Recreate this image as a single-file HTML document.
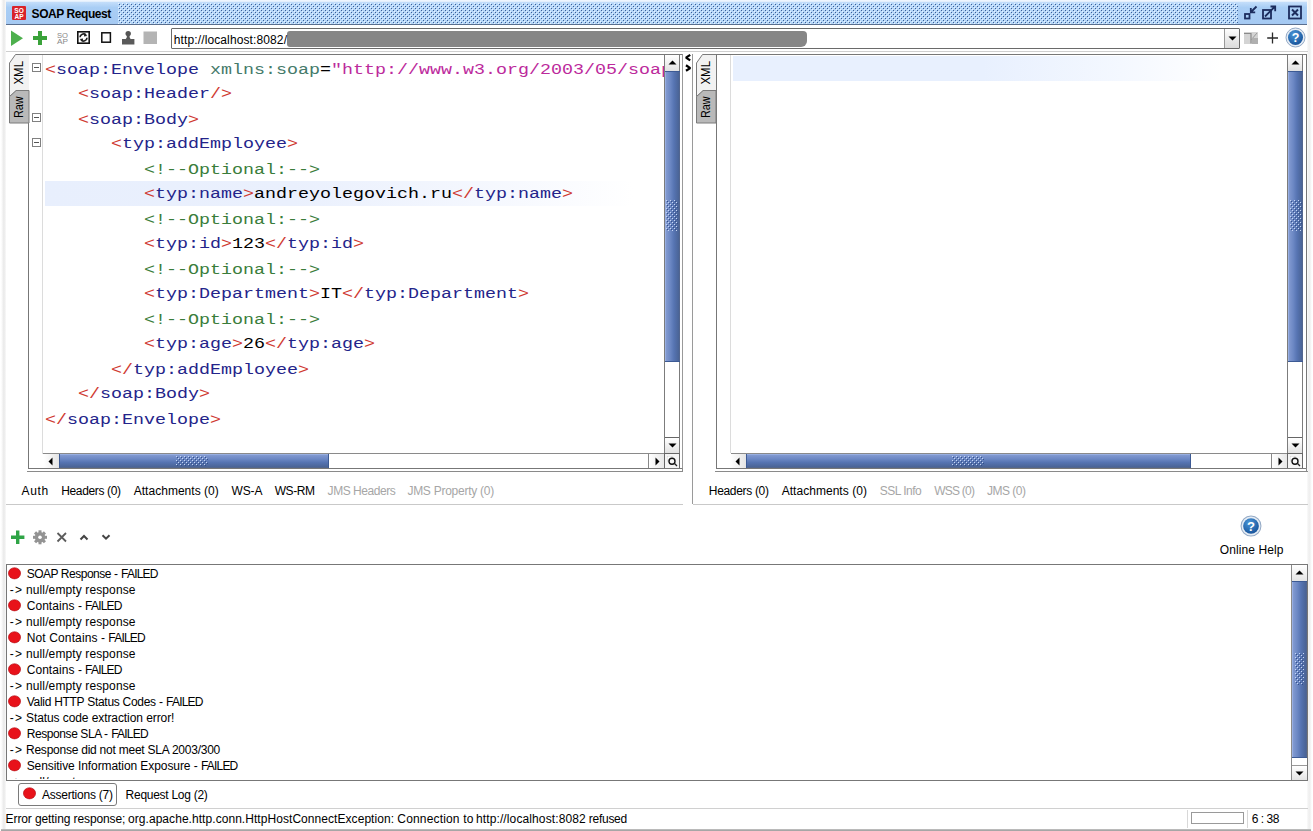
<!DOCTYPE html>
<html><head><meta charset="utf-8"><title>SOAP Request</title>
<style>
html,body{margin:0;padding:0;background:#fff;}
body{width:1313px;height:831px;position:relative;overflow:hidden;font-family:"Liberation Sans",sans-serif;font-size:12px;color:#000;}
.abs{position:absolute;}
#frameL{left:1px;top:0;width:5px;height:831px;background:linear-gradient(90deg,#fff,#ececec 50%,#eee 75%,#fafafa);}
#frameR{left:1307px;top:0;width:5px;height:831px;background:linear-gradient(90deg,#fafafa,#efefef 40%,#f0f0f0 60%,#fff);}
#frameB{left:1px;top:829px;width:1310px;height:2px;background:linear-gradient(#c4c4c4,#9c9c9c);}
#title{left:6px;top:2px;width:1301px;height:23px;background:linear-gradient(#c4defa,#a9cef5 25%,#a5c9f2);border-bottom:1px solid #5a6f8f;box-sizing:border-box;}
#title .dots{left:112px;top:1px;width:1124px;height:20px;background-color:#cfe2f7;background-image:radial-gradient(circle at 1px 1px,#6d8fc0 0.8px,transparent 1.1px);background-size:4px 4px;opacity:.8}
#title .txt{left:26px;top:4px;font-weight:bold;font-size:12px;letter-spacing:-0.45px;}
.code{font-family:"Liberation Mono",monospace;font-size:18.33px;line-height:30.488px;white-space:pre;transform:scaleY(0.82);transform-origin:0 0;}
.t{color:#cf3a32}.n{color:#24248a}.a{color:#457a6a}.v{color:#bc2a9c}.c{color:#3a7d3a}.x{color:#000}
.tab{font-size:12px;letter-spacing:-0.15px;white-space:nowrap;}
.dis{color:#a8a8a8}
.lb{font-size:12px;line-height:14px;height:14px;white-space:pre;}
</style></head><body>
<div class="abs" style="left:6px;top:0;width:1301px;height:2px;background:linear-gradient(#f4f9ff,#dcebfb)"></div><div class="abs" id="frameL"></div><div class="abs" id="frameR"></div><div class="abs" id="frameB"></div>

<svg width="0" height="0" style="position:absolute"><defs><pattern id="bp2" width="4" height="4" patternUnits="userSpaceOnUse"><rect x="0" y="0" width="1" height="1" fill="#c6d6f6"/><rect x="2" y="2" width="1" height="1" fill="#c6d6f6"/><rect x="1" y="1" width="1" height="1" fill="#34508a"/><rect x="3" y="3" width="1" height="1" fill="#34508a"/></pattern></defs></svg>
<!-- title bar -->
<div class="abs" id="title">
  <svg class="abs" style="left:112px;top:1px" width="1120" height="21"><defs><pattern id="bp" width="4" height="4" patternUnits="userSpaceOnUse"><rect width="4" height="4" fill="#b5d6f8"/><rect x="0" y="0" width="1" height="1" fill="#e8f3ff"/><rect x="2" y="2" width="1" height="1" fill="#e8f3ff"/><rect x="1" y="1" width="1" height="1" fill="#3d5f96"/><rect x="3" y="3" width="1" height="1" fill="#3d5f96"/></pattern></defs><rect width="1120" height="21" fill="url(#bp)"/></svg>
  <svg class="abs" style="left:6px;top:4px" width="14" height="14" viewBox="0 0 14 14"><rect width="14" height="14" rx="1" fill="#d8232a"/><text x="7" y="6.5" font-family="Liberation Sans,sans-serif" font-weight="bold" font-size="6.5" fill="#fff" text-anchor="middle">SO</text><text x="7" y="12.5" font-family="Liberation Sans,sans-serif" font-weight="bold" font-size="6.5" fill="#fff" text-anchor="middle">AP</text></svg>
  <svg class="abs" style="left:1236px;top:2.500px" width="64" height="16" viewBox="1242 4 64 16">
    <g fill="none" stroke="#1c2d5e" stroke-width="1.800">
      <rect x="1245" y="13" width="4.500" height="4.500"/>
      <path d="M1256.500 5.500L1251 11M1250.800 7v4.400h4.400"/>
      <rect x="1263" y="9" width="8" height="8.500"/>
      <path d="M1265 15.500L1275 5.500M1270.500 5.500h4.700v4.700"/>
      <rect x="1289" y="5.500" width="12" height="12"/>
      <path d="M1292 8.500l6 6M1298 8.500l-6 6" stroke-width="2"/>
    </g>
  </svg>

</div>

<!-- toolbar -->
<div class="abs" id="toolbar" style="left:6px;top:25px;width:1302px;height:26px;">
  <svg class="abs" style="left:0;top:0" width="170" height="26" viewBox="6 25 170 26">
    <polygon points="11,30.5 11,46 23,38.2" fill="#4db04d"/>
    <path d="M38 31h4v5h5v4h-5v5h-4v-5h-5v-4h5z" fill="#3aa23a"/>
    <text x="57" y="37.5" font-family="Liberation Sans,sans-serif" font-size="7" fill="#888" textLength="11" lengthAdjust="spacingAndGlyphs">SO</text>
    <text x="57" y="44" font-family="Liberation Sans,sans-serif" font-size="7" fill="#888" textLength="11" lengthAdjust="spacingAndGlyphs">AP</text>
    <rect x="77.8" y="31.8" width="11.4" height="11.4" fill="#fff" stroke="#111" stroke-width="1.6"/>
    <path d="M80 37.300a3.500 3.500 0 0 1 6-2.300M87 37.700a3.500 3.500 0 0 1-6 2.300" fill="none" stroke="#222" stroke-width="1.700"/>
    <path d="M84.500 33.300l2.800 2.700-3.400.6zM82.500 41.700l-2.800-2.700 3.400-.6z" fill="#222"/>
    <rect x="101.8" y="32.8" width="8.6" height="9.4" fill="#fff" stroke="#111" stroke-width="1.5"/>
    <circle cx="128.200" cy="33.600" r="2.700" fill="#555"/>
    <rect x="126.800" y="35" width="2.800" height="4" fill="#555"/>
    <path d="M126.800 37.500h2.800l1.200 1.800h-5.200z" fill="#555"/><rect x="122" y="39" width="12.400" height="5.500" fill="#5a5a5a"/>
    <rect x="143.500" y="31.500" width="13.500" height="12.500" fill="#b4b4b4"/>
  </svg>
  <div class="abs" style="left:165px;top:3px;width:1069px;height:21px;border:1px solid #6a6a6a;box-sizing:border-box;background:#fff;border-radius:1px"></div>
  <div class="abs" style="left:281px;top:6px;width:520px;height:16px;background:#868686;border-radius:3px 4px 6px 3px"></div>
  <div class="abs" style="left:1218px;top:4px;width:15px;height:19px;background:linear-gradient(#fdfdfd,#e8e8e8 60%,#dcdcdc);border-left:1px solid #999;box-sizing:border-box"></div>
  <svg class="abs" style="left:1222px;top:11px" width="9" height="5"><polygon points="0.500,0.500 8.500,0.500 4.500,4.500" fill="#000"/></svg>
  <svg class="abs" style="left:1238px;top:6px" width="15" height="14" viewBox="0 0 15 14"><rect x="0" y="1" width="14" height="12" fill="#d4d4d4"/><path d="M0 2.500h7v10" fill="none" stroke="#8a8a8a" stroke-width="1.200"/><path d="M7 9L13 2" stroke="#9a9a9a" stroke-width="1"/><rect x="8" y="7" width="6" height="6" fill="#b0b0b0"/></svg>
  <svg class="abs" style="left:1260px;top:6px" width="13" height="13" viewBox="0 0 13 13"><path d="M6.500 1.500v11M1.200 7h10.800" stroke="#2a2a2a" stroke-width="1.300"/></svg>
  <svg class="abs" style="left:1279px;top:2px" width="21" height="21" viewBox="0 0 21 21"><defs><radialGradient id="hg" cx="0.400" cy="0.300" r="0.800"><stop offset="0" stop-color="#4a96d8"/><stop offset="1" stop-color="#124c94"/></radialGradient></defs><circle cx="10.500" cy="10.500" r="9.500" fill="#e6edf5" stroke="#94aac6" stroke-width="1"/><circle cx="10.500" cy="10.500" r="7.500" fill="url(#hg)"/><text x="10.500" y="15" text-anchor="middle" font-family="Liberation Sans,sans-serif" font-weight="bold" font-size="12.500" fill="#fff">?</text></svg>
</div>
<div class="abs" style="left:6px;top:51px;width:1302px;height:1px;background:#cfcfcf"></div>

<!-- left editor -->
<div class="abs" id="edL" style="left:28px;top:54px;width:655px;height:415px;border:1px solid #777;border-right-color:#999;box-sizing:border-box;background:#fff;overflow:hidden">
  <div class="abs" style="left:13px;top:0;width:1px;height:399px;background:#dcdcdc"></div>
  <div class="abs" style="left:3px;top:8px;width:9px;height:9px;border:1px solid #808080;box-sizing:border-box;background:#fff"><div class="abs" style="left:1px;top:3px;width:5px;height:1px;background:#555"></div></div><div class="abs" style="left:3px;top:58px;width:9px;height:9px;border:1px solid #808080;box-sizing:border-box;background:#fff"><div class="abs" style="left:1px;top:3px;width:5px;height:1px;background:#555"></div></div><div class="abs" style="left:3px;top:83px;width:9px;height:9px;border:1px solid #808080;box-sizing:border-box;background:#fff"><div class="abs" style="left:1px;top:3px;width:5px;height:1px;background:#555"></div></div>
  <div class="abs" style="left:16px;top:126px;width:619px;height:25px;background:linear-gradient(90deg,#e8effd 0,#eaf0fd 40%,#f4f7fe 70%,#fff 95%)"></div>
  <div class="abs code" style="left:16px;top:3px;width:619px;height:485px;overflow:hidden"><div style="height:30.488px"><span class="t">&lt;</span><span class="n">soap:Envelope</span> <span class="a">xmlns:soap</span>=<span class="v">"http://www.w3.org/2003/05/soap-envelope"</span> <span class="a">xmlns:typ</span>=<span class="v">"http://www.example.org/types"</span><span class="t">&gt;</span></div><div style="height:30.488px">   <span class="t">&lt;</span><span class="n">soap:Header</span><span class="t">/&gt;</span></div><div style="height:30.488px">   <span class="t">&lt;</span><span class="n">soap:Body</span><span class="t">&gt;</span></div><div style="height:30.488px">      <span class="t">&lt;</span><span class="n">typ:addEmployee</span><span class="t">&gt;</span></div><div style="height:30.488px">         <span class="c">&lt;!--Optional:--&gt;</span></div><div style="height:30.488px">         <span class="t">&lt;</span><span class="n">typ:name</span><span class="t">&gt;</span>andreyolegovich.ru<span class="t">&lt;/</span><span class="n">typ:name</span><span class="t">&gt;</span></div><div style="height:30.488px">         <span class="c">&lt;!--Optional:--&gt;</span></div><div style="height:30.488px">         <span class="t">&lt;</span><span class="n">typ:id</span><span class="t">&gt;</span>123<span class="t">&lt;/</span><span class="n">typ:id</span><span class="t">&gt;</span></div><div style="height:30.488px">         <span class="c">&lt;!--Optional:--&gt;</span></div><div style="height:30.488px">         <span class="t">&lt;</span><span class="n">typ:Department</span><span class="t">&gt;</span>IT<span class="t">&lt;/</span><span class="n">typ:Department</span><span class="t">&gt;</span></div><div style="height:30.488px">         <span class="c">&lt;!--Optional:--&gt;</span></div><div style="height:30.488px">         <span class="t">&lt;</span><span class="n">typ:age</span><span class="t">&gt;</span>26<span class="t">&lt;/</span><span class="n">typ:age</span><span class="t">&gt;</span></div><div style="height:30.488px">      <span class="t">&lt;/</span><span class="n">typ:addEmployee</span><span class="t">&gt;</span></div><div style="height:30.488px">   <span class="t">&lt;/</span><span class="n">soap:Body</span><span class="t">&gt;</span></div><div style="height:30.488px"><span class="t">&lt;/</span><span class="n">soap:Envelope</span><span class="t">&gt;</span></div></div>
  <!-- v scrollbar -->
  <div class="abs" style="left:635px;top:0;width:16px;height:398px;background:#fff;border-left:1px solid #7c7c7c;border-right:1px solid #7c7c7c;box-sizing:border-box"></div>
  <div class="abs" style="left:636px;top:0;width:14px;height:16px;background:linear-gradient(#fff,#eee 60%,#e2e2e2)"></div>
  <svg class="abs" style="left:639px;top:5px" width="9" height="5"><polygon points="4.500,0.500 8.500,4.500 0.500,4.500" fill="#000"/></svg>
  <div class="abs" style="left:636px;top:16px;width:15px;height:291px;background:linear-gradient(90deg,#a9bfee 0,#8199d0 8%,#6c88c4 35%,#5674b2 60%,#4b6598 90%,#56668a 100%);border-top:1px solid #3c5a94;border-bottom:1px solid #3c5a94;box-sizing:border-box"></div>
  <div class="abs" style="left:636px;top:382px;width:14px;height:16px;background:linear-gradient(#fff,#eee 60%,#e2e2e2);border-top:1px solid #666;box-sizing:border-box"></div>
  <svg class="abs" style="left:639px;top:388px" width="9" height="5"><polygon points="0.500,0.500 8.500,0.500 4.500,4.500" fill="#000"/></svg>
  <!-- h scrollbar -->
  <div class="abs" style="left:14px;top:398px;width:637px;height:15px;background:#fff;border-top:1px solid #8a8a8a;box-sizing:border-box"></div>
  <div class="abs" style="left:15px;top:399px;width:15px;height:14px;background:linear-gradient(90deg,#fff,#e4e4e4)"></div>
  <svg class="abs" style="left:18.500px;top:402px" width="5" height="9"><polygon points="4.500,0.500 4.500,8.500 0.500,4.500" fill="#000"/></svg>
  <div class="abs" style="left:30px;top:399px;width:270px;height:14px;background:linear-gradient(180deg,#a9bfee 0,#8199d0 8%,#6c88c4 35%,#5674b2 60%,#4b6598 90%,#56668a 100%);border-left:1px solid #3c5a94;border-right:1px solid #3c5a94;box-sizing:border-box"></div>
  <svg class="abs" style="left:637px;top:145px" width="12" height="31"><rect width="12" height="31" fill="url(#bp2)"/></svg>
  <svg class="abs" style="left:147px;top:401px" width="32" height="10"><rect width="32" height="10" fill="url(#bp2)"/></svg>
  <div class="abs" style="left:619px;top:399px;width:16px;height:14px;background:linear-gradient(90deg,#fff,#e8e8e8);border-left:1px solid #888;box-sizing:border-box"></div>
  <svg class="abs" style="left:625.5px;top:402px" width="5" height="9"><polygon points="0.500,0.500 0.500,8.500 4.500,4.500" fill="#000"/></svg>
  <div class="abs" style="left:635px;top:398px;width:16px;height:15px;border:1px solid #666;border-bottom:0;box-sizing:border-box;background:#f4f4f4"></div>
  <svg class="abs" style="left:638px;top:401px" width="11" height="11" viewBox="0 0 11 11"><rect x="0" y="0" width="5" height="5" fill="#fff" stroke="#bbb" stroke-width="0.600"/><circle cx="5" cy="5.300" r="3" fill="#f8f8f8" stroke="#111" stroke-width="1.400"/><path d="M7.300 7.300L10 10" stroke="#222" stroke-width="1.300"/></svg>
</div>

<!-- right editor -->
<div class="abs" id="edR" style="left:716px;top:54px;width:591px;height:415px;border:1px solid #777;box-sizing:border-box;background:#fff;overflow:hidden">
  <div class="abs" style="left:13px;top:0;width:1px;height:398px;background:#dcdcdc"></div>
  <div class="abs" style="left:16px;top:1px;width:555px;height:25px;background:linear-gradient(90deg,#e8f0fe 0,#e8f0fe 45%,#f4f8ff 70%,#fff 88%)"></div>
  <div class="abs" style="left:570px;top:0;width:16px;height:398px;background:#fff;border-left:1px solid #7c7c7c;border-right:1px solid #7c7c7c;box-sizing:border-box"></div>
  <div class="abs" style="left:571px;top:0;width:14px;height:16px;background:linear-gradient(#fff,#eee 60%,#e2e2e2)"></div>
  <svg class="abs" style="left:574px;top:5px" width="9" height="5"><polygon points="4.500,0.500 8.500,4.500 0.500,4.500" fill="#000"/></svg>
  <div class="abs" style="left:571px;top:16px;width:15px;height:291px;background:linear-gradient(90deg,#a9bfee 0,#8199d0 8%,#6c88c4 35%,#5674b2 60%,#4b6598 90%,#56668a 100%);border-top:1px solid #3c5a94;border-bottom:1px solid #3c5a94;box-sizing:border-box"></div>
  <div class="abs" style="left:571px;top:382px;width:14px;height:16px;background:linear-gradient(#fff,#eee 60%,#e2e2e2);border-top:1px solid #666;box-sizing:border-box"></div>
  <svg class="abs" style="left:574px;top:388px" width="9" height="5"><polygon points="0.500,0.500 8.500,0.500 4.500,4.500" fill="#000"/></svg>
  <div class="abs" style="left:14px;top:398px;width:572px;height:15px;background:#fff;border-top:1px solid #8a8a8a;box-sizing:border-box"></div>
  <div class="abs" style="left:14px;top:399px;width:15px;height:14px;background:linear-gradient(90deg,#fff,#e4e4e4)"></div>
  <svg class="abs" style="left:17.500px;top:402px" width="5" height="9"><polygon points="4.500,0.500 4.500,8.500 0.500,4.500" fill="#000"/></svg>
  <div class="abs" style="left:29px;top:399px;width:445px;height:14px;background:linear-gradient(180deg,#a9bfee 0,#8199d0 8%,#6c88c4 35%,#5674b2 60%,#4b6598 90%,#56668a 100%);border-left:1px solid #3c5a94;border-right:1px solid #3c5a94;box-sizing:border-box"></div>
  <svg class="abs" style="left:573px;top:145px" width="12" height="31"><rect width="12" height="31" fill="url(#bp2)"/></svg>
  <svg class="abs" style="left:235px;top:401px" width="32" height="10"><rect width="32" height="10" fill="url(#bp2)"/></svg>
  <div class="abs" style="left:554px;top:399px;width:16px;height:14px;background:linear-gradient(90deg,#fff,#e8e8e8);border-left:1px solid #888;box-sizing:border-box"></div>
  <svg class="abs" style="left:560.5px;top:402px" width="5" height="9"><polygon points="0.500,0.500 0.500,8.500 4.500,4.500" fill="#000"/></svg>
  <div class="abs" style="left:570px;top:398px;width:16px;height:15px;border:1px solid #666;border-bottom:0;box-sizing:border-box;background:#f4f4f4"></div>
  <svg class="abs" style="left:573px;top:401px" width="11" height="11" viewBox="0 0 11 11"><rect x="0" y="0" width="5" height="5" fill="#fff" stroke="#bbb" stroke-width="0.600"/><circle cx="5" cy="5.300" r="3" fill="#f8f8f8" stroke="#111" stroke-width="1.400"/><path d="M7.300 7.300L10 10" stroke="#222" stroke-width="1.300"/></svg>
</div>


<svg class="abs" style="left:8px;top:54px" width="22" height="72" viewBox="0 0 22 72">
  <path d="M21 36.500H8L1.500 42.500V69H21z" fill="#b9b9b9" stroke="#7a7a7a" stroke-width="1"/>
  <path d="M21 0.500H7.500L1.500 9V42.500L8 36.500H21" fill="#f2f2f2" stroke="#7a7a7a" stroke-width="1"/>
  <text transform="translate(14.500,30.500) rotate(-90)" font-family="Liberation Sans,sans-serif" font-size="12" fill="#000" textLength="23.500" lengthAdjust="spacingAndGlyphs">XML</text>
  <text transform="translate(14.500,64) rotate(-90)" font-family="Liberation Sans,sans-serif" font-size="12" fill="#000" textLength="21.500" lengthAdjust="spacingAndGlyphs">Raw</text>
</svg>
<svg class="abs" style="left:695.300px;top:54px" width="22" height="72" viewBox="0 0 22 72">
  <path d="M21 36.500H8L1.500 42.500V69H21z" fill="#b9b9b9" stroke="#7a7a7a" stroke-width="1"/>
  <path d="M21 0.500H7.500L1.500 9V42.500L8 36.500H21" fill="#f2f2f2" stroke="#7a7a7a" stroke-width="1"/>
  <text transform="translate(14.500,30.500) rotate(-90)" font-family="Liberation Sans,sans-serif" font-size="12" fill="#000" textLength="23.500" lengthAdjust="spacingAndGlyphs">XML</text>
  <text transform="translate(14.500,64) rotate(-90)" font-family="Liberation Sans,sans-serif" font-size="12" fill="#000" textLength="21.500" lengthAdjust="spacingAndGlyphs">Raw</text>
</svg>
<!-- splitter -->
<div class="abs" style="left:692px;top:54px;width:1px;height:450px;background:#9a9a9a"></div>
<svg class="abs" style="left:683px;top:53px" width="9" height="20" viewBox="683 53 9 20"><path d="M690.200 54.900L686 57.600L690.200 60.400M686 65.200L690.200 68.100L686 70.800" fill="none" stroke="#000" stroke-width="2.300" stroke-linejoin="bevel"/></svg>
<!-- second bottom lines under editors -->
<div class="abs" style="left:682px;top:468px;width:1px;height:4px;background:#8a8a8a"></div><div class="abs" style="left:1306px;top:468px;width:1px;height:4px;background:#8a8a8a"></div>
<div class="abs" style="left:27px;top:471px;width:656px;height:1px;background:#8a8a8a"></div>
<div class="abs" style="left:715px;top:471px;width:593px;height:1px;background:#8a8a8a"></div>
<!-- tabs rows -->
<div class="abs" style="left:6px;top:504px;width:677px;height:1px;background:#c9c9c9"></div>
<div class="abs" style="left:693px;top:504px;width:615px;height:1px;background:#c9c9c9"></div>

<!-- bottom -->
<div class="abs" id="assert" style="left:6px;top:564px;width:1302px;height:217px;border:1px solid #777;box-sizing:border-box;background:#fff;overflow:hidden"><svg class="abs" style="left:1px;top:2px" width="13" height="13" viewBox="0 0 13 13"><ellipse cx="6.500" cy="6.300" rx="6.100" ry="5.600" fill="#e8121a"/><ellipse cx="6.500" cy="6.300" rx="6.100" ry="5.600" fill="none" stroke="#b00c12" stroke-width="0.600"/></svg><svg class="abs" style="left:1px;top:34px" width="13" height="13" viewBox="0 0 13 13"><ellipse cx="6.500" cy="6.300" rx="6.100" ry="5.600" fill="#e8121a"/><ellipse cx="6.500" cy="6.300" rx="6.100" ry="5.600" fill="none" stroke="#b00c12" stroke-width="0.600"/></svg><svg class="abs" style="left:1px;top:66px" width="13" height="13" viewBox="0 0 13 13"><ellipse cx="6.500" cy="6.300" rx="6.100" ry="5.600" fill="#e8121a"/><ellipse cx="6.500" cy="6.300" rx="6.100" ry="5.600" fill="none" stroke="#b00c12" stroke-width="0.600"/></svg><svg class="abs" style="left:1px;top:98px" width="13" height="13" viewBox="0 0 13 13"><ellipse cx="6.500" cy="6.300" rx="6.100" ry="5.600" fill="#e8121a"/><ellipse cx="6.500" cy="6.300" rx="6.100" ry="5.600" fill="none" stroke="#b00c12" stroke-width="0.600"/></svg><svg class="abs" style="left:1px;top:130px" width="13" height="13" viewBox="0 0 13 13"><ellipse cx="6.500" cy="6.300" rx="6.100" ry="5.600" fill="#e8121a"/><ellipse cx="6.500" cy="6.300" rx="6.100" ry="5.600" fill="none" stroke="#b00c12" stroke-width="0.600"/></svg><svg class="abs" style="left:1px;top:162px" width="13" height="13" viewBox="0 0 13 13"><ellipse cx="6.500" cy="6.300" rx="6.100" ry="5.600" fill="#e8121a"/><ellipse cx="6.500" cy="6.300" rx="6.100" ry="5.600" fill="none" stroke="#b00c12" stroke-width="0.600"/></svg><svg class="abs" style="left:1px;top:194px" width="13" height="13" viewBox="0 0 13 13"><ellipse cx="6.500" cy="6.300" rx="6.100" ry="5.600" fill="#e8121a"/><ellipse cx="6.500" cy="6.300" rx="6.100" ry="5.600" fill="none" stroke="#b00c12" stroke-width="0.600"/></svg>
  <div class="abs" style="left:1284px;top:0;width:16px;height:215px;background:#fff;border-left:1px solid #8a8a8a;box-sizing:border-box"></div>
  <div class="abs" style="left:1285px;top:0;width:15px;height:16px;background:linear-gradient(#fff,#e4e4e4);"></div>
  <svg class="abs" style="left:1288px;top:5px" width="9" height="5"><polygon points="4.500,0.500 8.500,4.500 0.500,4.500" fill="#000"/></svg>
  <div class="abs" style="left:1285px;top:16px;width:15px;height:177px;background:linear-gradient(90deg,#a9bfee 0,#8199d0 8%,#6c88c4 35%,#5674b2 60%,#4b6598 90%,#56668a 100%);border-top:1px solid #3c5a94;border-bottom:1px solid #3c5a94;box-sizing:border-box"></div>
  <svg class="abs" style="left:1288px;top:88px" width="9" height="32"><rect width="9" height="32" fill="url(#bp2)"/></svg>
  <div class="abs" style="left:1285px;top:200px;width:15px;height:15px;background:linear-gradient(#fff,#e4e4e4);border-top:1px solid #999;box-sizing:border-box"></div>
  <svg class="abs" style="left:1288px;top:206px" width="9" height="5"><polygon points="0.500,0.500 8.500,0.500 4.500,4.500" fill="#000"/></svg>
</div>


<!-- assertion toolbar -->
<svg class="abs" style="left:8px;top:528px" width="110" height="18" viewBox="8 528 110 18">
  <path d="M16 530.500h3.400v5h5v3.400h-5v5h-3.400v-5h-5v-3.400h5z" fill="#2fa446"/>
  <g transform="translate(40,537.300)" fill="#939393"><circle r="5.200"/><g id="teeth"><rect x="-1.500" y="-7" width="3" height="14"/><rect x="-7" y="-1.500" width="14" height="3"/></g><g transform="rotate(45)"><rect x="-1.500" y="-7" width="3" height="14"/><rect x="-7" y="-1.500" width="14" height="3"/></g><circle r="1.800" fill="#fff"/></g>
  <path d="M57.500 533l8.500 8.500M66 533l-8.500 8.500" stroke="#5c5c5c" stroke-width="1.800" fill="none"/>
  <path d="M80.500 539.500l3.500-3.500l3.500 3.500" stroke="#444" stroke-width="2" fill="none"/>
  <path d="M102.500 535.200l3.500 3.500l3.500-3.500" stroke="#444" stroke-width="2" fill="none"/>
</svg>
<!-- online help -->
<svg class="abs" style="left:1240px;top:515px" width="22" height="22" viewBox="0 0 21 21"><circle cx="10.500" cy="10.500" r="9.500" fill="#e6edf5" stroke="#94aac6" stroke-width="1"/><circle cx="10.500" cy="10.500" r="7.500" fill="url(#hg)"/><text x="10.500" y="15" text-anchor="middle" font-family="Liberation Sans,sans-serif" font-weight="bold" font-size="12.500" fill="#fff">?</text></svg>
<!-- bottom tabs -->
<div class="abs" style="left:18px;top:783px;width:99px;height:23px;border:1px solid #7a7a7a;border-radius:3px;box-sizing:border-box;background:#fff"></div>
<svg class="abs" style="left:23px;top:787px" width="13" height="13" viewBox="0 0 13 13"><ellipse cx="6.500" cy="6.300" rx="6.100" ry="5.600" fill="#e8121a"/><ellipse cx="6.500" cy="6.300" rx="6.100" ry="5.600" fill="none" stroke="#b00c12" stroke-width="0.600"/></svg>
<!-- status bar -->
<div class="abs" style="left:6px;top:808px;width:1302px;height:1px;background:#d0d0d0"></div>
<div class="abs" style="left:1187px;top:810px;width:1px;height:18px;background:#d8d8d8"></div>
<div class="abs" style="left:1247px;top:810px;width:1px;height:18px;background:#d8d8d8"></div>
<div class="abs" style="left:1191px;top:812px;width:53px;height:12px;border:1px solid #9a9a9a;box-sizing:border-box;background:#fff"></div>
<!-- LABELS-BEGIN -->
<div class="abs lb" style="left:31.6px;top:7.0px;letter-spacing:-0.434px;font-weight:bold">SOAP Request</div>
<div class="abs lb" style="left:173.8px;top:33.0px;letter-spacing:0.117px;">http://localhost:8082/</div>
<div class="abs lb" style="left:21.6px;top:484.0px;letter-spacing:0.604px;">Auth</div>
<div class="abs lb" style="left:61.2px;top:484.0px;letter-spacing:-0.356px;">Headers (0)</div>
<div class="abs lb" style="left:133.7px;top:484.0px;letter-spacing:0.028px;">Attachments (0)</div>
<div class="abs lb" style="left:231.5px;top:484.0px;letter-spacing:-0.148px;">WS-A</div>
<div class="abs lb" style="left:274.7px;top:484.0px;letter-spacing:-0.425px;">WS-RM</div>
<div class="abs lb" style="left:327.6px;top:484.0px;letter-spacing:-0.460px;color:#a6a6a6">JMS Headers</div>
<div class="abs lb" style="left:407.4px;top:484.0px;letter-spacing:-0.259px;color:#a6a6a6">JMS Property (0)</div>
<div class="abs lb" style="left:708.8px;top:484.0px;letter-spacing:-0.326px;">Headers (0)</div>
<div class="abs lb" style="left:781.7px;top:484.0px;letter-spacing:0.035px;">Attachments (0)</div>
<div class="abs lb" style="left:879.7px;top:484.0px;letter-spacing:-0.513px;color:#a6a6a6">SSL Info</div>
<div class="abs lb" style="left:934.3px;top:484.0px;letter-spacing:-0.791px;color:#a6a6a6">WSS (0)</div>
<div class="abs lb" style="left:987.1px;top:484.0px;letter-spacing:-0.517px;color:#a6a6a6">JMS (0)</div>
<div class="abs lb" style="left:1219.7px;top:543.0px;letter-spacing:0.110px;">Online Help</div>
<div class="abs lb" style="left:41.9px;top:788.0px;letter-spacing:-0.225px;">Assertions (7)</div>
<div class="abs lb" style="left:125.6px;top:788.0px;letter-spacing:-0.276px;">Request Log (2)</div>
<div class="abs lb" style="left:5.6px;top:812.0px;letter-spacing:-0.103px;">Error getting response;</div>
<div class="abs lb" style="left:128.0px;top:812.0px;letter-spacing:0.056px;">org.apache.http.conn.HttpHostConnectException:</div>
<div class="abs lb" style="left:397.3px;top:812.0px;letter-spacing:0.170px;">Connection to</div>
<div class="abs lb" style="left:476.0px;top:812.0px;letter-spacing:0.114px;">http://localhost:8082</div>
<div class="abs lb" style="left:588.8px;top:812.0px;letter-spacing:-0.272px;">refused</div>
<div class="abs lb" style="left:1251.7px;top:812.0px;letter-spacing:-0.446px;">6 : 38</div>
<div class="abs" style="left:7px;top:565px;width:1284px;height:214px;overflow:hidden">
<div class="abs lb" style="left:19.7px;top:2.0px;letter-spacing:-0.473px">SOAP Response -</div>
<div class="abs lb" style="left:114.1px;top:2.0px;letter-spacing:-0.792px">FAILED</div>
<div class="abs lb" style="left:2.8px;top:18.0px;letter-spacing:1.2px">-&gt;</div>
<div class="abs lb" style="left:19.0px;top:18.0px;letter-spacing:0.117px">null/empty response</div>
<div class="abs lb" style="left:19.7px;top:34.0px;letter-spacing:0.055px">Contains -</div>
<div class="abs lb" style="left:78.1px;top:34.0px;letter-spacing:-0.792px">FAILED</div>
<div class="abs lb" style="left:2.8px;top:50.0px;letter-spacing:1.2px">-&gt;</div>
<div class="abs lb" style="left:19.0px;top:50.0px;letter-spacing:0.117px">null/empty response</div>
<div class="abs lb" style="left:19.7px;top:66.0px;letter-spacing:0.131px">Not Contains -</div>
<div class="abs lb" style="left:101.3px;top:66.0px;letter-spacing:-0.792px">FAILED</div>
<div class="abs lb" style="left:2.8px;top:82.0px;letter-spacing:1.2px">-&gt;</div>
<div class="abs lb" style="left:19.0px;top:82.0px;letter-spacing:0.117px">null/empty response</div>
<div class="abs lb" style="left:19.7px;top:98.0px;letter-spacing:0.055px">Contains -</div>
<div class="abs lb" style="left:78.1px;top:98.0px;letter-spacing:-0.792px">FAILED</div>
<div class="abs lb" style="left:2.8px;top:114.0px;letter-spacing:1.2px">-&gt;</div>
<div class="abs lb" style="left:19.0px;top:114.0px;letter-spacing:0.117px">null/empty response</div>
<div class="abs lb" style="left:19.7px;top:130.0px;letter-spacing:-0.281px">Valid HTTP Status Codes -</div>
<div class="abs lb" style="left:159.1px;top:130.0px;letter-spacing:-0.792px">FAILED</div>
<div class="abs lb" style="left:2.8px;top:146.0px;letter-spacing:1.2px">-&gt;</div>
<div class="abs lb" style="left:19.0px;top:146.0px;letter-spacing:-0.084px">Status code extraction error!</div>
<div class="abs lb" style="left:19.7px;top:162.0px;letter-spacing:-0.417px">Response SLA -</div>
<div class="abs lb" style="left:104.2px;top:162.0px;letter-spacing:-0.792px">FAILED</div>
<div class="abs lb" style="left:2.8px;top:178.0px;letter-spacing:1.2px">-&gt;</div>
<div class="abs lb" style="left:19.0px;top:178.0px;letter-spacing:-0.238px">Response did not meet SLA 2003/300</div>
<div class="abs lb" style="left:19.7px;top:194.0px;letter-spacing:-0.078px">Sensitive Information Exposure -</div>
<div class="abs lb" style="left:193.9px;top:194.0px;letter-spacing:-0.792px">FAILED</div>
<div class="abs lb" style="left:2.8px;top:210.0px;letter-spacing:1.2px">-&gt;</div>
<div class="abs lb" style="left:19.0px;top:210.0px;letter-spacing:0.117px">null/empty response</div>
</div>
<!-- LABELS-END -->
</body></html>
